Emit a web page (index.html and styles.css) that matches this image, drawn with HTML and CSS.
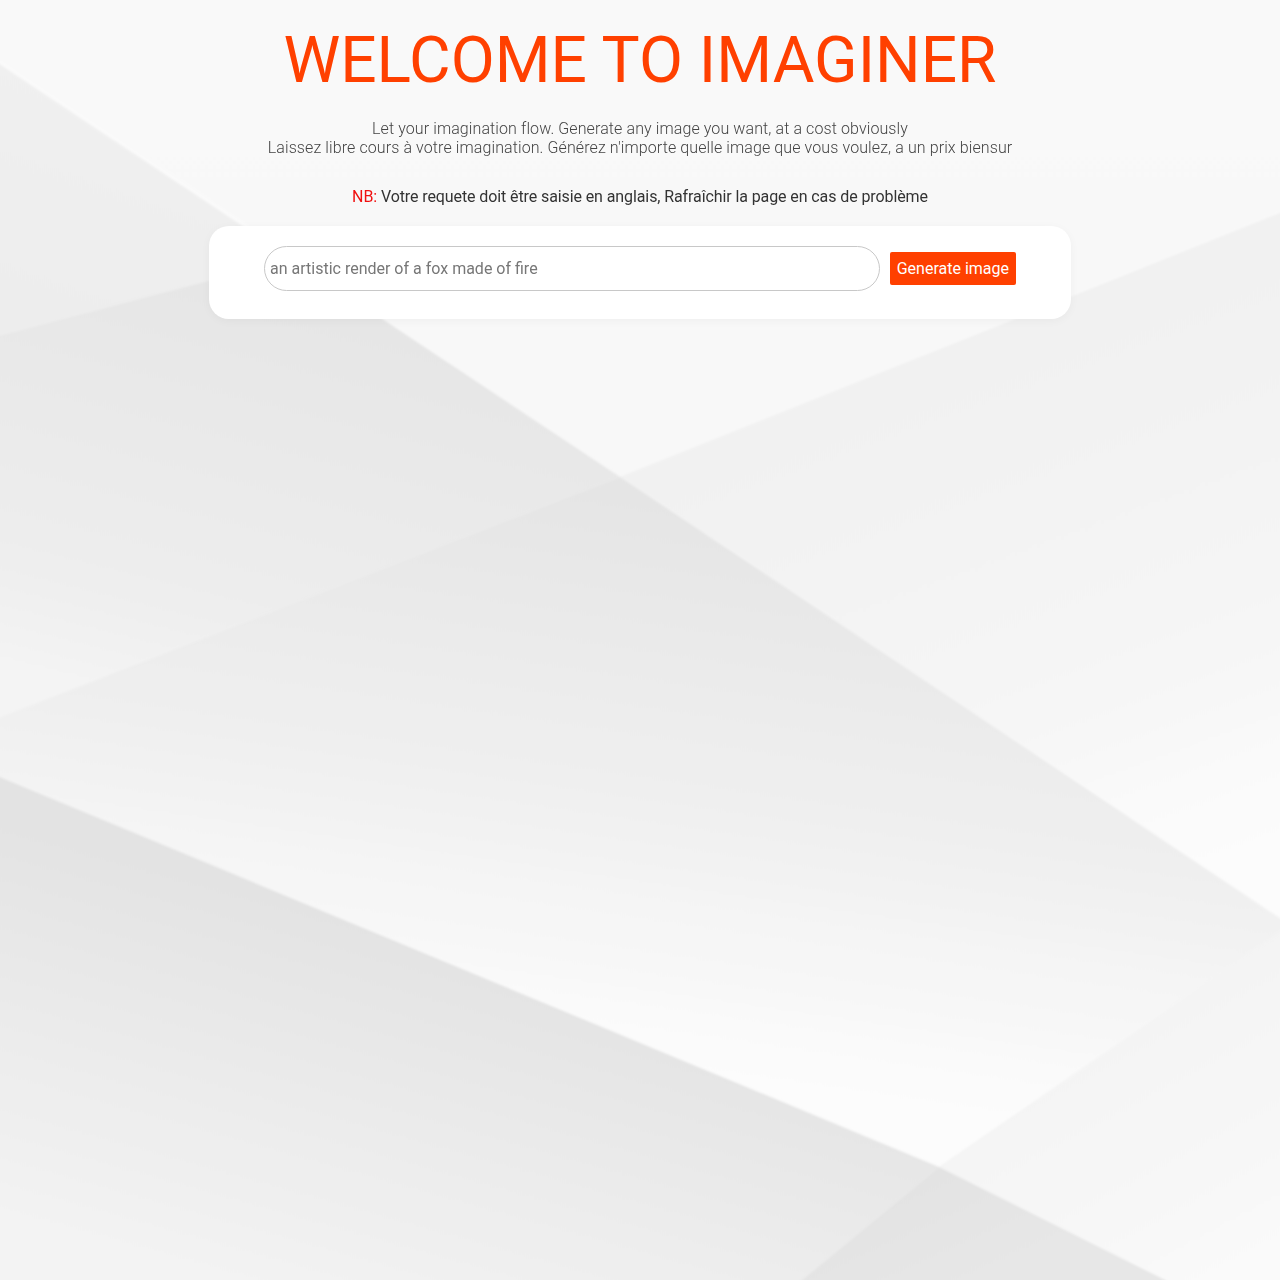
FILE: index.html
```html
<!DOCTYPE html>
<html lang="fr">
<head>
<meta charset="utf-8">
<title>Imaginer</title>
<link rel="stylesheet" href="styles.css">
</head>
<body>
<svg class="bg" viewBox="0 0 1280 1280" preserveAspectRatio="none" aria-hidden="true">
  <defs>
    <linearGradient id="gTop" gradientUnits="userSpaceOnUse" x1="0" y1="0" x2="0" y2="480">
      <stop offset="0" stop-color="#f9f9f9"/><stop offset="1" stop-color="#f8f8f8"/>
    </linearGradient>
    <linearGradient id="gL1" gradientUnits="userSpaceOnUse" x1="150" y1="120" x2="80" y2="320">
      <stop offset="0" stop-color="#f0f0f0"/><stop offset="1" stop-color="#ededed"/>
    </linearGradient>
    <linearGradient id="gL2" gradientUnits="userSpaceOnUse" x1="250" y1="300" x2="150" y2="700">
      <stop offset="0" stop-color="#e6e6e6"/><stop offset="0.7" stop-color="#ededed"/><stop offset="1" stop-color="#f4f4f4"/>
    </linearGradient>
    <linearGradient id="gR" gradientUnits="userSpaceOnUse" x1="950" y1="330" x2="1150" y2="880">
      <stop offset="0" stop-color="#f1f1f1"/><stop offset="0.6" stop-color="#f5f5f5"/><stop offset="1" stop-color="#fcfcfc"/>
    </linearGradient>
    <linearGradient id="gM" gradientUnits="userSpaceOnUse" x1="640" y1="500" x2="560" y2="1050">
      <stop offset="0" stop-color="#e5e5e5"/><stop offset="0.5" stop-color="#efefef"/><stop offset="1" stop-color="#fcfcfc"/>
    </linearGradient>
    <linearGradient id="gBL" gradientUnits="userSpaceOnUse" x1="350" y1="920" x2="250" y2="1280">
      <stop offset="0" stop-color="#e3e3e3"/><stop offset="0.5" stop-color="#ebebeb"/><stop offset="1" stop-color="#f3f3f3"/>
    </linearGradient>
    <linearGradient id="gBR" gradientUnits="userSpaceOnUse" x1="1100" y1="1000" x2="1250" y2="1280">
      <stop offset="0" stop-color="#f3f3f3"/><stop offset="1" stop-color="#fafafa"/>
    </linearGradient>
    <linearGradient id="gBT" gradientUnits="userSpaceOnUse" x1="950" y1="1170" x2="1000" y2="1280">
      <stop offset="0" stop-color="#e3e3e3"/><stop offset="1" stop-color="#e7e7e7"/>
    </linearGradient>
    <filter id="soft" x="-2%" y="-2%" width="104%" height="104%"><feGaussianBlur stdDeviation="1.2"/></filter>
  </defs>
  <rect x="0" y="0" width="1280" height="1280" fill="#f6f6f6"/>
  <g filter="url(#soft)">
    <polygon points="-10,-10 1290,-10 1290,209 620,477 -10,58" fill="url(#gTop)"/>
    <polygon points="-10,58 292,259 -10,338" fill="url(#gL1)"/>
    <polygon points="-10,338 292,259 620,477 -10,721" fill="url(#gL2)"/>
    <polygon points="620,477 1290,209 1290,925" fill="url(#gR)"/>
    <polygon points="620,477 1290,925 939,1167 -10,773 -10,721" fill="url(#gM)"/>
    <polygon points="-10,773 939,1167 790,1290 -10,1290" fill="url(#gBL)"/>
    <polygon points="1290,925 1290,1290 1185,1290 939,1167" fill="url(#gBR)"/>
    <polygon points="939,1167 1185,1290 790,1290" fill="url(#gBT)"/>
    <polyline points="0,62 292,257" fill="none" stroke="#fbfbfb" stroke-width="2"/>
  </g>
</svg>
<main class="page">
  <h1 class="title">WELCOME TO IMAGINER</h1>
  <p class="lead">Let your imagination flow. Generate any image you want, at a cost obviously<br>Laissez libre cours à votre imagination. Générez n'importe quelle image que vous voulez, a un prix biensur</p>
  <p class="note"><span class="nb">NB:</span> Votre requete doit être saisie en anglais, Rafraîchir la page en cas de problème</p>
  <form class="card">
    <input class="prompt" type="text" placeholder="an artistic render of a fox made of fire">
    <button class="go" type="button">Generate image</button>
  </form>
</main>
</body>
</html>
```

FILE: styles.css
```css
html, body {
  margin: 0;
  padding: 0;
  height: 100%;
}
body {
  font-family: Roboto, "Liberation Sans", sans-serif;
  color: #333;
  background: #f6f6f6;
}
.bg {
  position: fixed;
  inset: 0;
  width: 100%;
  height: 100%;
  z-index: -1;
}
.page {
  display: flex;
  flex-direction: column;
  align-items: center;
  text-align: center;
  padding-top: 23px;
}
.title {
  margin: 0;
  font-weight: 400;
  font-size: 64px;
  line-height: 75px;
  color: #ff4000;
}
.lead {
  margin: 21px 0 0;
  font-size: 16px;
  font-weight: 300;
  line-height: 19px;
  letter-spacing: 0.1px;
  color: #444;
}
.note {
  margin: 30px 0 0;
  font-size: 16px;
  line-height: 19px;
  letter-spacing: -0.1px;
  color: #333;
}
.nb {
  color: #f01010;
}
.card {
  box-sizing: border-box;
  width: 862px;
  margin-top: 20px;
  padding: 20px 55px 28px;
  background: #fff;
  border-radius: 20px;
  box-shadow: 0 2px 10px rgba(0,0,0,0.04);
  display: flex;
  align-items: center;
  gap: 10px;
}
.prompt {
  flex: 1;
  height: 45px;
  box-sizing: border-box;
  border: 1px solid #c8c8c8;
  border-radius: 23px;
  padding: 0 5px;
  font-family: Roboto, "Liberation Sans", sans-serif;
  font-size: 16px;
  color: #333;
  background: #fff;
  outline: none;
}
.prompt::placeholder {
  color: #777;
}
.go {
  height: 33px;
  padding: 0 7px;
  border: none;
  border-radius: 2px;
  background: #ff4000;
  color: #fff;
  font-family: Roboto, "Liberation Sans", sans-serif;
  font-size: 16px;
  cursor: pointer;
}
```
